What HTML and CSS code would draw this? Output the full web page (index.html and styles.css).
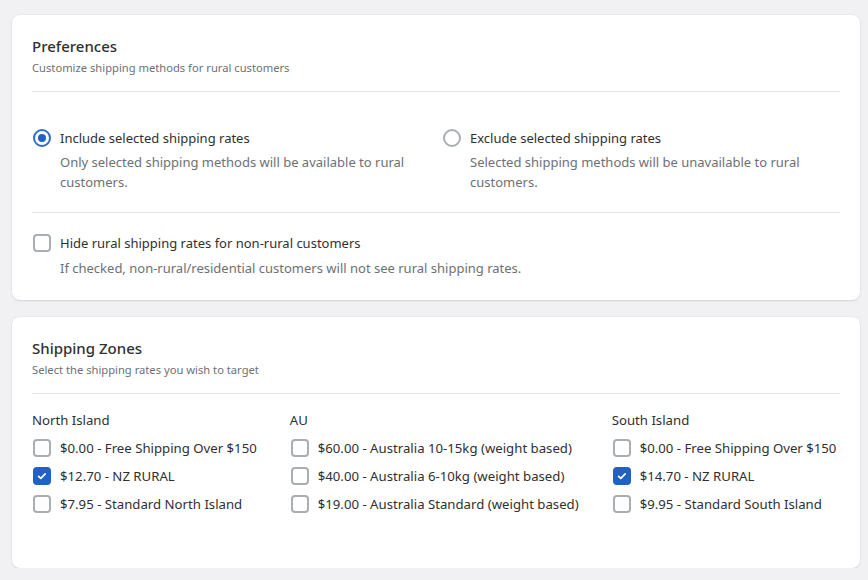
FILE: index.html
```html
<!DOCTYPE html>
<html>
<head>
<meta charset="utf-8">
<link rel="stylesheet" href="styles.css">
</head>
<body>
<div class="page">
  <section class="card card-prefs">
    <h2 class="card-title">Preferences</h2>
    <p class="card-subtitle">Customize shipping methods for rural customers</p>
    <hr class="divider">
    <div class="radio-grid">
      <div class="option">
        <span class="control"><span class="radio radio-on"></span></span>
        <div class="option-text">
          <div class="option-label">Include selected shipping rates</div>
          <div class="option-help">Only selected shipping methods will be available to rural customers.</div>
        </div>
      </div>
      <div class="option">
        <span class="control"><span class="radio"></span></span>
        <div class="option-text">
          <div class="option-label">Exclude selected shipping rates</div>
          <div class="option-help">Selected shipping methods will be unavailable to rural customers.</div>
        </div>
      </div>
    </div>
    <hr class="divider divider-mid">
    <div class="option option-hide">
      <span class="control"><span class="checkbox"></span></span>
      <div class="option-text">
        <div class="option-label">Hide rural shipping rates for non-rural customers</div>
        <div class="option-help help-tight">If checked, non-rural/residential customers will not see rural shipping rates.</div>
      </div>
    </div>
  </section>

  <section class="card card-zones">
    <h2 class="card-title">Shipping Zones</h2>
    <p class="card-subtitle">Select the shipping rates you wish to target</p>
    <hr class="divider">
    <div class="zones">
      <div class="zone">
        <div class="zone-name">North Island</div>
        <div class="rate"><span class="control"><span class="checkbox"></span></span><span>$0.00 - Free Shipping Over $150</span></div>
        <div class="rate"><span class="control"><span class="checkbox checked"><svg viewBox="0 0 18 18" width="18" height="18"><path d="M5.6 9.3l2.2 2.1 4.4-4.6" fill="none" stroke="#fff" stroke-width="1.7" stroke-linecap="round" stroke-linejoin="round"/></svg></span></span><span>$12.70 - NZ RURAL</span></div>
        <div class="rate"><span class="control"><span class="checkbox"></span></span><span>$7.95 - Standard North Island</span></div>
      </div>
      <div class="zone">
        <div class="zone-name">AU</div>
        <div class="rate"><span class="control"><span class="checkbox"></span></span><span>$60.00 - Australia 10-15kg (weight based)</span></div>
        <div class="rate"><span class="control"><span class="checkbox"></span></span><span>$40.00 - Australia 6-10kg (weight based)</span></div>
        <div class="rate"><span class="control"><span class="checkbox"></span></span><span>$19.00 - Australia Standard (weight based)</span></div>
      </div>
      <div class="zone">
        <div class="zone-name">South Island</div>
        <div class="rate"><span class="control"><span class="checkbox"></span></span><span>$0.00 - Free Shipping Over $150</span></div>
        <div class="rate"><span class="control"><span class="checkbox checked"><svg viewBox="0 0 18 18" width="18" height="18"><path d="M5.6 9.3l2.2 2.1 4.4-4.6" fill="none" stroke="#fff" stroke-width="1.7" stroke-linecap="round" stroke-linejoin="round"/></svg></span></span><span>$14.70 - NZ RURAL</span></div>
        <div class="rate"><span class="control"><span class="checkbox"></span></span><span>$9.95 - Standard South Island</span></div>
      </div>
    </div>
  </section>
</div>
</body>
</html>
```
FILE: styles.css
```css
* { box-sizing: border-box; }

body {
  margin: 0;
  background: #f1f1f3;
  font-family: "Noto Sans", "Open Sans", sans-serif;
  color: #303030;
}

.page {
  display: flex;
  flex-direction: column;
  gap: 17px;
  padding: 15px 8px 0 12px;
}

.card {
  background: #fff;
  border-radius: 8px;
  box-shadow: 0 1px 2px rgba(0, 0, 0, 0.10), 0 0 0 1px rgba(0, 0, 0, 0.025);
  padding: 21px 20px 22px;
}

.card-zones {
  padding-bottom: 54px;
}

.card-title {
  margin: 0;
  font-size: 15px;
  font-weight: 500;
  line-height: 20px;
  color: #303030;
}

.card-subtitle {
  margin: 4px 0 0;
  font-size: 11.2px;
  line-height: 16px;
  color: #6d7175;
}

.divider {
  margin: 15px 0 0;
  border: 0;
  border-top: 1px solid #e4e5e7;
  height: 0;
}

.divider-mid {
  margin-top: 20px;
}

.radio-grid {
  display: grid;
  grid-template-columns: 1fr 1fr;
  column-gap: 12px;
  margin-top: 36px;
}

.option {
  display: flex;
  gap: 8px;
  align-items: flex-start;
}

.option-hide {
  margin-top: 20px;
}

.control {
  flex: none;
  width: 20px;
  height: 20px;
  display: flex;
  align-items: center;
  justify-content: center;
}

.option-label {
  font-size: 13px;
  line-height: 20px;
  color: #303030;
}

.option-help {
  margin-top: 4px;
  font-size: 13px;
  line-height: 20px;
  color: #6d7175;
}

.help-tight {
  margin-top: 5px;
}

.radio {
  width: 18px;
  height: 18px;
  border-radius: 50%;
  border: 2px solid #a9aeb5;
  background: #fff;
}

.radio-on {
  border-color: #2c6ecb;
  position: relative;
}

.radio-on::after {
  content: "";
  position: absolute;
  left: 3px;
  top: 3px;
  width: 8px;
  height: 8px;
  border-radius: 50%;
  background: #2160c4;
}

.checkbox {
  width: 18px;
  height: 18px;
  border-radius: 4px;
  border: 2px solid #a9aeb5;
  background: #fff;
  display: flex;
  align-items: center;
  justify-content: center;
}

.checkbox.checked {
  border: 0;
  background: #2160c4;
}

.checkbox svg {
  display: block;
}

.zones {
  display: flex;
  gap: 33px;
  margin-top: 16px;
}

.zone {
  display: flex;
  flex-direction: column;
  gap: 8px;
}

.zone-name {
  font-size: 13.2px;
  line-height: 20px;
  color: #303030;
}

.rate {
  display: flex;
  gap: 8px;
  font-size: 13.2px;
  line-height: 20px;
  color: #303030;
  white-space: nowrap;
}
```
